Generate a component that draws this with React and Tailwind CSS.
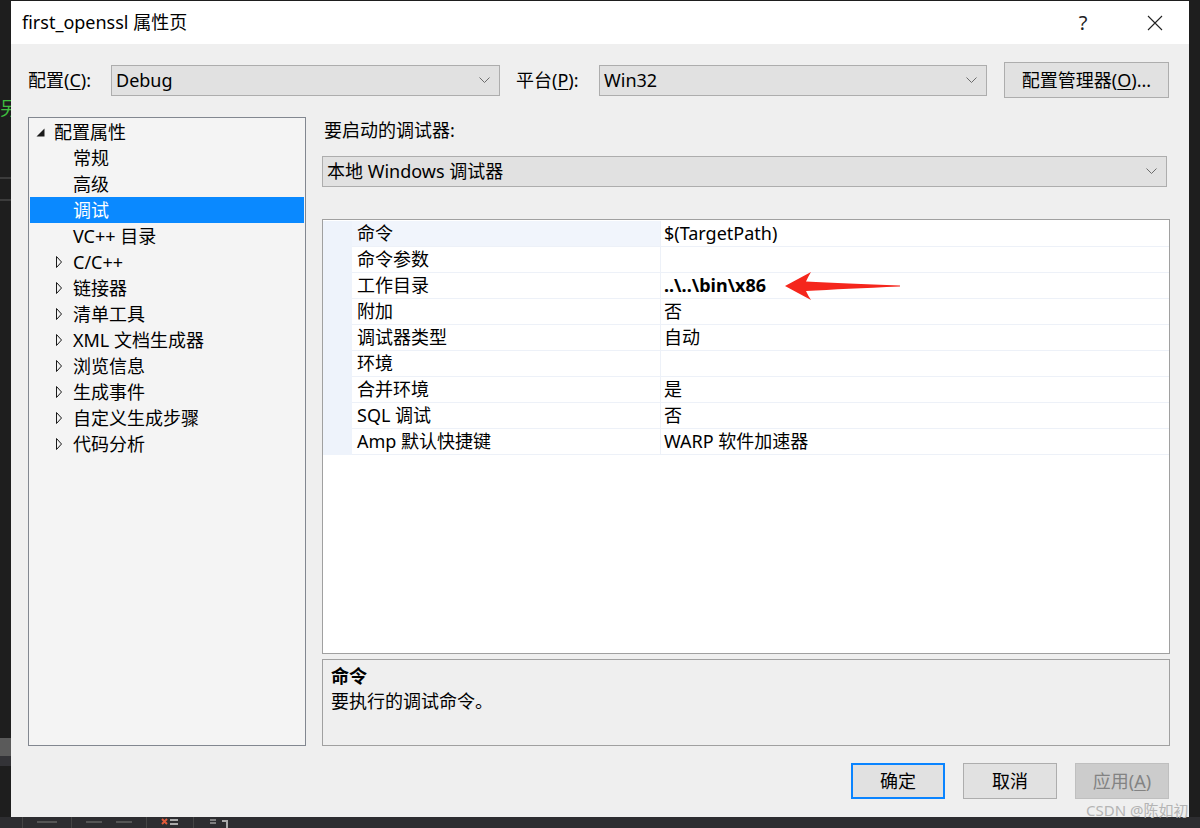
import React from 'react';

const treeItems = [
  { label: '配置属性', level: 0, icon: 'open' },
  { label: '常规', level: 1 },
  { label: '高级', level: 1 },
  { label: '调试', level: 1, selected: true },
  { label: 'VC++ 目录', level: 1 },
  { label: 'C/C++', level: 1, icon: 'closed' },
  { label: '链接器', level: 1, icon: 'closed' },
  { label: '清单工具', level: 1, icon: 'closed' },
  { label: 'XML 文档生成器', level: 1, icon: 'closed' },
  { label: '浏览信息', level: 1, icon: 'closed' },
  { label: '生成事件', level: 1, icon: 'closed' },
  { label: '自定义生成步骤', level: 1, icon: 'closed' },
  { label: '代码分析', level: 1, icon: 'closed' },
];

const props = [
  { name: '命令', value: '$(TargetPath)' },
  { name: '命令参数', value: '' },
  { name: '工作目录', value: '..\\..\\bin\\x86', bold: true },
  { name: '附加', value: '否' },
  { name: '调试器类型', value: '自动' },
  { name: '环境', value: '' },
  { name: '合并环境', value: '是' },
  { name: 'SQL 调试', value: '否' },
  { name: 'Amp 默认快捷键', value: 'WARP 软件加速器' },
];

const Chevron = () => (
  <svg width="11" height="7" viewBox="0 0 11 7" fill="none" stroke="#6b6b6b" strokeWidth="1">
    <path d="M0.5 0.5L5.5 5.5L10.5 0.5" />
  </svg>
);

const Select = ({ value, className }) => (
  <div className={`flex h-[31px] items-center justify-between border border-[#adadad] bg-[#e1e1e1] pl-[4px] pr-[9px] ${className}`}>
    <span>{value}</span>
    <Chevron />
  </div>
);

const TreeRow = ({ item }) => (
  <div
    className={`flex h-[26px] items-center ${item.level === 0 ? 'pl-[6px]' : 'pl-[25px]'} ${
      item.selected ? 'bg-[#0a89ff] text-white' : 'text-black'
    }`}
  >
    <span className="flex w-[18px] items-center">
      {item.icon === 'open' && (
        <svg width="9" height="9" viewBox="0 0 9 9">
          <path d="M8.5 0.5V8.5H0.5Z" fill="#1a1a1a" />
        </svg>
      )}
      {item.icon === 'closed' && (
        <svg width="8" height="12" viewBox="0 0 8 12" fill="none" stroke="#1a1a1a" strokeWidth="1">
          <path d="M1.5 0.5L6.5 6L1.5 11.5Z" />
        </svg>
      )}
    </span>
    <span>{item.label}</span>
  </div>
);

export default function App() {
  return (
    <div className="relative flex h-[828px] w-[1200px] flex-col overflow-hidden bg-[#1e1e1e] pt-[1px] font-['Noto_Sans','Noto_Sans_CJK_SC',sans-serif] text-[18px] text-black">
      <div className="flex pl-[11px]">
        {/* Dialog */}
        <div className="flex h-[816px] w-[1178px] flex-col bg-[#efefef]">
          {/* Title bar */}
          <div className="flex h-[43px] items-center bg-white pl-[11px] pr-[11px]">
            <span>first_openssl 属性页</span>
            <div className="ml-auto flex items-center gap-[26px]">
              <span className="w-[46px] text-center text-[20px] text-[#222]">?</span>
              <span className="flex w-[46px] justify-center">
                <svg width="16" height="16" viewBox="0 0 16 16" stroke="#222" strokeWidth="1.1">
                  <path d="M1 1L15 15M15 1L1 15" />
                </svg>
              </span>
            </div>
          </div>

          {/* Body */}
          <div className="flex flex-1 flex-col pl-[17px] pr-[19px] pt-[18px]">
            <div className="flex h-[36px] items-center">
              <span className="w-[83px]">
                配置(<span className="underline underline-offset-2">C</span>):
              </span>
              <Select value="Debug" className="w-[389px]" />
              <span className="ml-[16px] w-[83px]">
                平台(<span className="underline underline-offset-2">P</span>):
              </span>
              <Select value="Win32" className="w-[388px]" />
              <button className="ml-[17px] h-[36px] w-[165px] border border-[#adadad] bg-[#e1e1e1]">
                配置管理器(<span className="underline underline-offset-2">O</span>)...
              </button>
            </div>

            <div className="mt-[19px] flex h-[629px] gap-[16px]">
              {/* Tree */}
              <div className="w-[278px] border border-[#828790] bg-[#f4f4f4] p-[1px]">
                {treeItems.map((item) => (
                  <TreeRow key={item.label} item={item} />
                ))}
              </div>

              {/* Right side */}
              <div className="flex flex-1 flex-col">
                <div className="flex h-[26px] items-center pl-[2px]">要启动的调试器:</div>
                <Select value="本地 Windows 调试器" className="mt-[13px] w-[845px]" />

                <div className="relative mt-[32px] h-[435px] border border-[#a0a0a0] bg-white pt-[1px]">
                  {props.map((p, i) => (
                    <div key={p.name} className="flex h-[26px]">
                      <div className="w-[29px] bg-[#eef3fb]" />
                      <div
                        className={`flex w-[308px] items-center border-b border-[#edf1f8] pl-[5px] ${
                          i === 0 ? 'bg-[#f1f5fc]' : ''
                        }`}
                      >
                        {p.name}
                      </div>
                      <div
                        className={`flex flex-1 items-center border-b border-l border-[#edf1f8] pl-[3px] ${
                          p.bold ? 'font-bold' : ''
                        }`}
                      >
                        {p.value}
                      </div>
                    </div>
                  ))}

                  {/* red annotation arrow */}
                  <svg
                    className="absolute left-[462px] top-[51px]"
                    width="116"
                    height="30"
                    viewBox="0 0 116 30"
                  >
                    <path
                      d="M0 15L26 1Q23 6 21 10.5Q60 12.5 115 14.6V15.6Q60 18 21 20Q23 24.5 26 29Z"
                      fill="#f5261c"
                    />
                  </svg>
                </div>

                <div className="mt-[5px] h-[87px] border border-[#a0a0a0] bg-[#efefef] px-[8px] pt-[4px] leading-[25px]">
                  <div className="font-bold">命令</div>
                  <div>要执行的调试命令。</div>
                </div>
              </div>
            </div>

            {/* Buttons */}
            <div className="mt-[17px] flex justify-end gap-[18px] pr-[1px]">
              <button className="h-[36px] w-[94px] border-2 border-[#0a84ff] bg-[#e1e1e1]">确定</button>
              <button className="h-[36px] w-[94px] border border-[#adadad] bg-[#e1e1e1]">取消</button>
              <button className="h-[36px] w-[94px] border border-[#bfbfbf] bg-[#cccccc] text-[#838383]">
                应用(<span className="underline underline-offset-2">A</span>)
              </button>
            </div>
          </div>
        </div>
      </div>

      {/* bottom toolbar strip of the editor behind */}
      <div className="flex h-[11px] items-start gap-[14px] bg-[#2d2d30] pl-[22px]">
        <span className="h-[11px] w-[1px] bg-[#444]" />
        <span className="mt-[4px] h-[2px] w-[20px] bg-[#555]" />
        <span className="h-[11px] w-[1px] bg-[#444]" />
        <span className="mt-[4px] h-[2px] w-[16px] bg-[#555]" />
        <span className="mt-[4px] h-[2px] w-[16px] bg-[#555]" />
        <span className="h-[11px] w-[1px] bg-[#444]" />
        <svg width="18" height="11" viewBox="0 0 18 11" className="mt-[1px]">
          <path d="M1 1L6 6M6 1L1 6" stroke="#e05a3a" strokeWidth="2" />
          <path d="M9 2H17M9 6H17" stroke="#aaa" strokeWidth="2" />
        </svg>
        <span className="h-[11px] w-[1px] bg-[#444]" />
        <svg width="22" height="11" viewBox="0 0 22 11">
          <path d="M14 4H19V11" stroke="#aaa" strokeWidth="2" fill="none" />
          <path d="M2 3H8M2 6H8" stroke="#999" strokeWidth="1.5" />
        </svg>
      </div>

      {/* background editor bits on the left, mostly hidden behind the dialog */}
      <div className="absolute left-0 top-[99px] h-[22px] w-[11px] overflow-hidden">
        <span className="block text-[18px] leading-none text-[#3fbf3f]">另</span>
      </div>
      <div className="absolute left-0 top-[177px] h-[2px] w-[11px] bg-[#3c3c3c]" />
      <div className="absolute left-0 top-[199px] h-[2px] w-[11px] bg-[#3c3c3c]" />
      <div className="absolute left-0 top-[738px] h-[18px] w-[11px] bg-[#5a5a5a]" />
      <div className="absolute left-0 top-[756px] h-[10px] w-[11px] bg-[#333337]" />

      {/* watermark */}
      <div className="absolute left-[1086px] top-[799px] text-[15px] text-[#b4b4b4]">CSDN @陈如初</div>
    </div>
  );
}
